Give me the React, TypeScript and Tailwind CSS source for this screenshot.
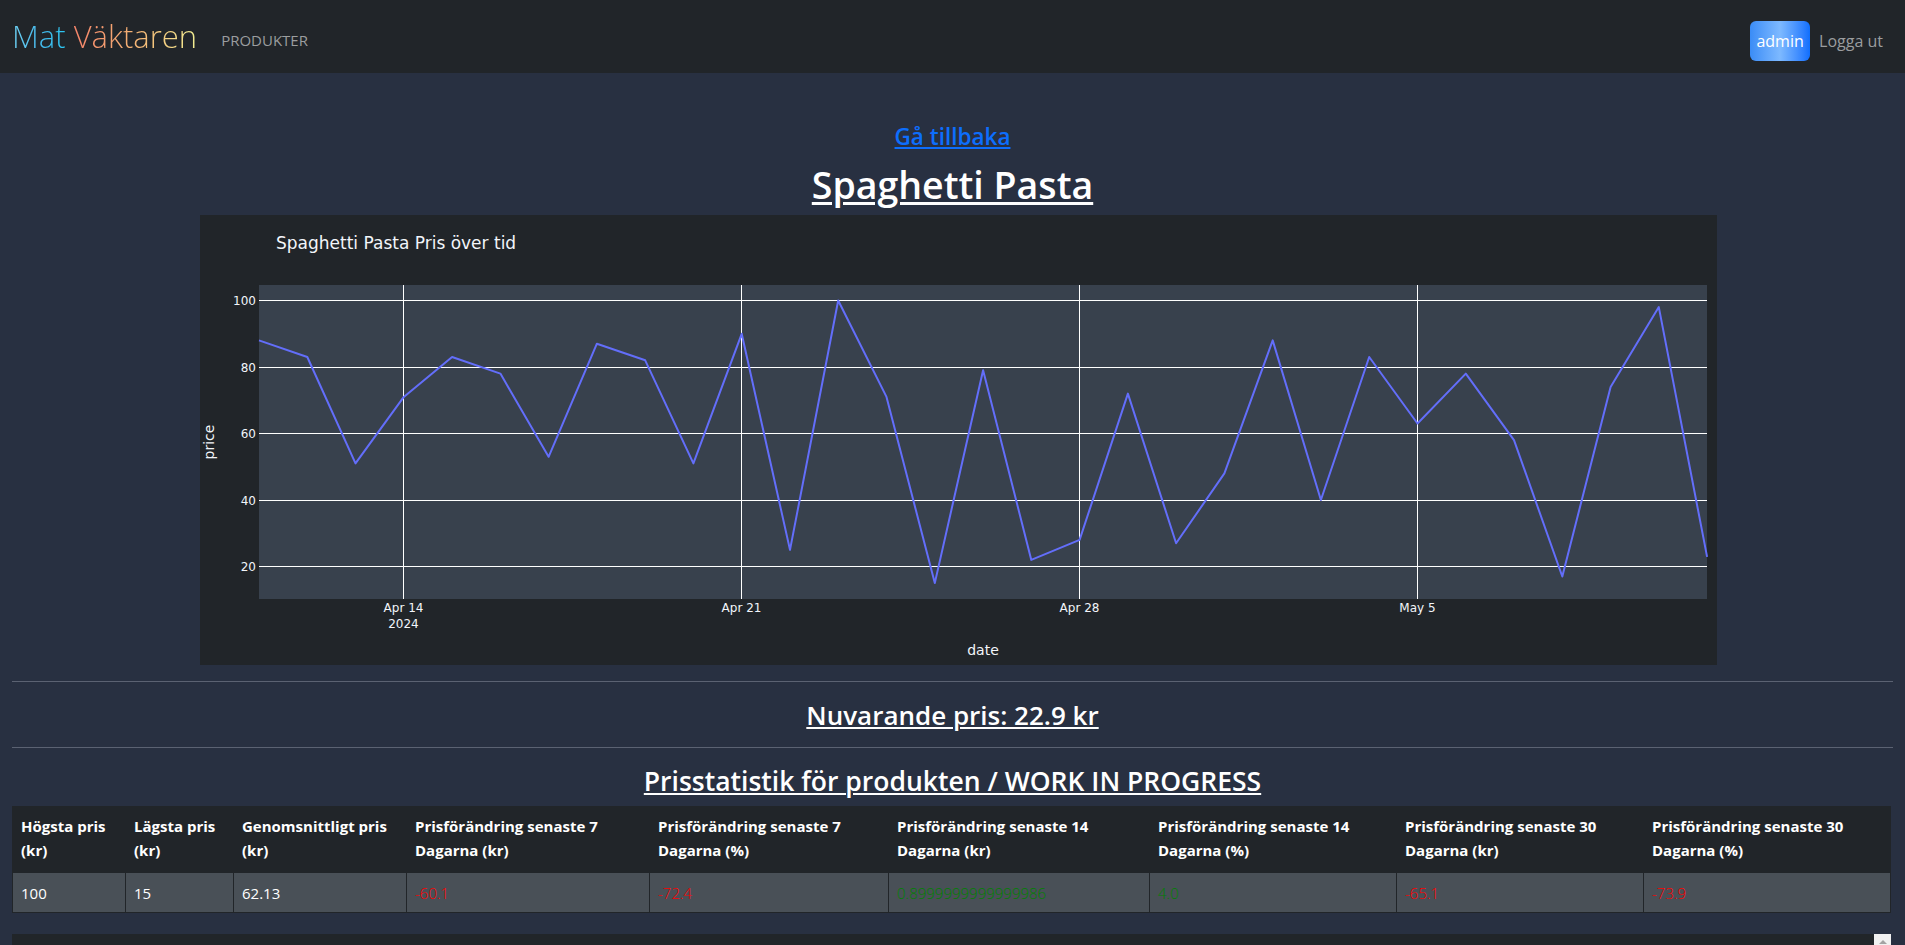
import React from "react";

const data = [88, 83, 51, 71, 83, 78, 53, 87, 82, 51, 90, 25, 100, 71, 15, 79, 22, 28, 72, 27, 48, 88, 40, 83, 63, 78, 58, 17, 74, 98, 22.9];

const xOf = (i: number) => 59 + i * 48.27;
const yOf = (v: number) => 351.5 - (v - 20) * 3.325;

function PriceChart() {
  const pts = data.map((v, i) => `${xOf(i).toFixed(1)},${yOf(v).toFixed(1)}`).join(" ");
  const hGrid = [
    { v: 100, y: 85.5 },
    { v: 80, y: 152.5 },
    { v: 60, y: 218.5 },
    { v: 40, y: 285.5 },
    { v: 20, y: 351.5 },
  ];
  const vGrid = [
    { x: 203.5, label: "Apr 14", sub: "2024" },
    { x: 541.5, label: "Apr 21" },
    { x: 879.5, label: "Apr 28" },
    { x: 1217.5, label: "May 5" },
  ];
  return (
    <svg width="1517" height="450" viewBox="0 0 1517 450" className="block">
      <rect x="0" y="0" width="1517" height="450" fill="#212529" />
      <text x="76" y="34" fill="#f2f5fa" fontSize="17" fontFamily="'DejaVu Sans', Verdana, sans-serif">
        Spaghetti Pasta Pris över tid
      </text>
      <rect x="59" y="70" width="1448" height="314" fill="#38414d" />
      {hGrid.map((g) => (
        <g key={g.v}>
          <line x1="59" x2="1507" y1={g.y} y2={g.y} stroke="#ffffff" strokeWidth="1" />
          <text x="56" y={g.y + 4} textAnchor="end" fill="#f2f5fa" fontSize="12" fontFamily="'DejaVu Sans', Verdana, sans-serif">
            {g.v}
          </text>
        </g>
      ))}
      {vGrid.map((g) => (
        <g key={g.label}>
          <line x1={g.x} x2={g.x} y1="70" y2="384" stroke="#ffffff" strokeWidth="1" />
          <text x={g.x} y="397" textAnchor="middle" fill="#f2f5fa" fontSize="12" fontFamily="'DejaVu Sans', Verdana, sans-serif">
            {g.label}
          </text>
          {g.sub && (
            <text x={g.x} y="413" textAnchor="middle" fill="#f2f5fa" fontSize="12" fontFamily="'DejaVu Sans', Verdana, sans-serif">
              {g.sub}
            </text>
          )}
        </g>
      ))}
      <polyline points={pts} fill="none" stroke="#636efa" strokeWidth="2" strokeLinejoin="round" />
      <text x="783" y="440" textAnchor="middle" fill="#f2f5fa" fontSize="14" fontFamily="'DejaVu Sans', Verdana, sans-serif">
        date
      </text>
      <text
        x="0"
        y="0"
        transform="translate(14 227) rotate(-90)"
        textAnchor="middle"
        fill="#f2f5fa"
        fontSize="14"
        fontFamily="'DejaVu Sans', Verdana, sans-serif"
      >
        price
      </text>
    </svg>
  );
}

const headers: [string, string][] = [
  ["Högsta pris", "(kr)"],
  ["Lägsta pris", "(kr)"],
  ["Genomsnittligt pris", "(kr)"],
  ["Prisförändring senaste 7", "Dagarna (kr)"],
  ["Prisförändring senaste 7", "Dagarna (%)"],
  ["Prisförändring senaste 14", "Dagarna (kr)"],
  ["Prisförändring senaste 14", "Dagarna (%)"],
  ["Prisförändring senaste 30", "Dagarna (kr)"],
  ["Prisförändring senaste 30", "Dagarna (%)"],
];

const widths = ["w-[113px]", "w-[108px]", "w-[173px]", "w-[243px]", "w-[239px]", "w-[261px]", "w-[247px]", "w-[247px]", "w-[247px]"];

const cells: { v: string; c: string }[] = [
  { v: "100", c: "text-white" },
  { v: "15", c: "text-white" },
  { v: "62.13", c: "text-white" },
  { v: "-60.1", c: "text-[#ff0000] font-light" },
  { v: "-72.4", c: "text-[#ff0000] font-light" },
  { v: "0.8999999999999986", c: "text-[#008000] font-light" },
  { v: "4.0", c: "text-[#008000] font-light" },
  { v: "-65.1", c: "text-[#ff0000] font-light" },
  { v: "-73.9", c: "text-[#ff0000] font-light" },
];

export default function App() {
  return (
    <div className="h-[945px] overflow-hidden bg-[#283041] font-['Open_Sans',sans-serif] text-white">
      <nav className="flex h-[73px] items-center bg-[#212529] pl-[12px] pr-[22px]">
        <span className="text-[31px] font-light leading-none">
          <span className="bg-gradient-to-r from-[#6fd3f5] via-[#45b8ea] to-[#28c6f2] bg-clip-text text-transparent">Mat</span>{" "}
          <span className="bg-gradient-to-r from-[#f5846a] via-[#f4b475] to-[#f1ee92] bg-clip-text text-transparent">Väktaren</span>
        </span>
        <span className="ml-[24px] mt-[8px] text-[15px] text-[#9b9d9f]">PRODUKTER</span>
        <div className="ml-auto mt-[9px] flex items-center">
          <span className="flex h-[40px] w-[60px] items-center justify-center rounded-[6px] bg-gradient-to-r from-[#3a8cf6] via-[#7db9ff] to-[#0d6efd] text-[16px] text-white">
            admin
          </span>
          <span className="ml-[9px] text-[16px] text-[#9b9d9f]">Logga ut</span>
        </div>
      </nav>
      <main className="flex flex-col px-[12px]">
        <div className="mt-[50px] text-center">
          <a className="text-[22.5px] font-semibold leading-[28px] text-[#0d6efd] underline decoration-2 underline-offset-2">Gå tillbaka</a>
        </div>
        <h1 className="mt-[10px] text-center text-[37.5px] font-semibold leading-[48px] underline decoration-[3px] underline-offset-[3px]">
          Spaghetti Pasta
        </h1>
        <div className="ml-[188px] mt-[6px] w-[1517px]">
          <PriceChart />
        </div>
        <div className="mt-[16px] h-px bg-[#5b6272]" />
        <h3 className="mt-[16px] text-center text-[26px] font-semibold leading-[34px] underline decoration-2 underline-offset-2">
          Nuvarande pris: 22.9 kr
        </h3>
        <div className="mt-[15px] h-px bg-[#5b6272]" />
        <h3 className="mt-[16px] text-center text-[26.5px] font-semibold leading-[34px] underline decoration-2 underline-offset-2">
          Prisstatistik för produkten / WORK IN PROGRESS
        </h3>
        <table className="mt-[8px] w-[1878px] table-fixed border-collapse text-[15px]">
          <colgroup>
            {widths.map((w, i) => (
              <col key={i} className={w} />
            ))}
          </colgroup>
          <thead>
            <tr className="h-[66px] bg-[#212529]">
              {headers.map(([a, b], i) => (
                <th key={i} className="whitespace-nowrap border border-[#212529] px-[8px] pb-[3px] text-left align-middle font-bold leading-[24px]">
                  {a}
                  <br />
                  {b}
                </th>
              ))}
            </tr>
          </thead>
          <tbody>
            <tr className="h-[40px] bg-[#495057]">
              {cells.map((c, i) => (
                <td key={i} className={`border border-[#212529] px-[8px] align-middle leading-[24px] ${c.c}`}>
                  {c.v}
                </td>
              ))}
            </tr>
          </tbody>
        </table>
        <div className="relative mt-[21px] h-[60px] w-[1879px] bg-[#212529]">
          <div className="absolute right-0 top-0 flex h-[17px] w-[17px] items-start justify-center bg-[#f1f1f1] pt-[6px]">
            <div className="h-0 w-0 border-x-[4px] border-b-[4px] border-x-transparent border-b-[#a3a3a3]" />
          </div>
        </div>
      </main>
    </div>
  );
}
